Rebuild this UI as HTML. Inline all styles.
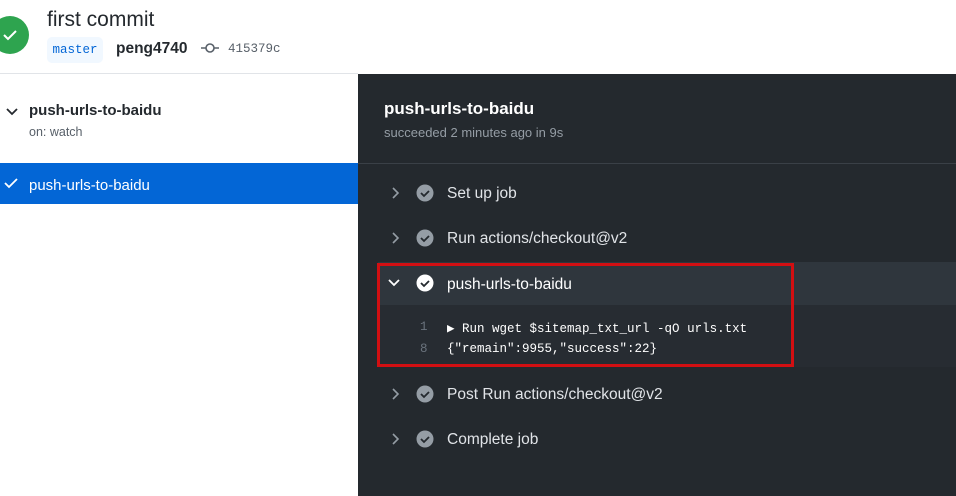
<!DOCTYPE html>
<html><head><style>
*{margin:0;padding:0;box-sizing:border-box}
body{width:956px;height:496px;overflow:hidden;background:#fff;font-family:"Liberation Sans",sans-serif;position:relative}
.abs{position:absolute}
.mono{font-family:"Liberation Mono",monospace}
.step{position:absolute;left:358px;width:598px;height:45px;color:#e1e4e8;font-size:15.5px}
.step .chev{position:absolute;left:32px;top:15px}
.step .ic{position:absolute;left:58px;top:13px}
.step .t{position:absolute;left:89px;top:14px}
</style></head><body>
<div class="abs" style="left:-9px;top:16px;width:38px;height:38px;border-radius:50%;background:#2ea44f"></div>
<svg class="abs" style="left:2px;top:28px" width="16" height="14"><path d="M2 7l4 4 8-8" stroke="#fff" stroke-width="2" fill="none"/></svg>
<div class="abs" style="left:47px;top:8px;font-size:21px;color:#24292e">first commit</div>
<div class="abs mono" style="left:47px;top:37px;width:56px;height:26px;background:#f1f8ff;border-radius:5px;color:#0366d6;font-size:12.5px;line-height:26px;text-align:center">master</div>
<div class="abs" style="left:116px;top:40px;font-size:15.5px;font-weight:bold;color:#24292e">peng4740</div>
<svg class="abs" style="left:201px;top:41px" width="18" height="14"><circle cx="9" cy="7" r="4" stroke="#586069" stroke-width="1.6" fill="none"/><path d="M0 7h5M13 7h5" stroke="#586069" stroke-width="1.6"/></svg>
<div class="abs mono" style="left:228px;top:42px;font-size:12.5px;color:#586069">415379c</div>
<div class="abs" style="left:0;top:73px;width:358px;height:1px;background:#e1e4e8"></div>
<svg class="abs" style="left:5px;top:107px" width="14" height="10"><path d="M2 2l5 5 5-5" stroke="#24292e" stroke-width="1.8" fill="none"/></svg>
<div class="abs" style="left:29px;top:102px;font-size:15px;font-weight:bold;color:#24292e">push-urls-to-baidu</div>
<div class="abs" style="left:29px;top:125px;font-size:12.5px;color:#586069">on: watch</div>
<div class="abs" style="left:0;top:163px;width:358px;height:41px;background:#0366d6"></div>
<svg class="abs" style="left:4px;top:177px" width="14" height="12"><path d="M1 6l4 4 8-8" stroke="#fff" stroke-width="1.8" fill="none"/></svg>
<div class="abs" style="left:29px;top:177px;font-size:15px;color:#fff">push-urls-to-baidu</div>
<div class="abs" style="left:358px;top:74px;width:598px;height:422px;background:#24292e"></div>
<div class="abs" style="left:384px;top:99px;font-size:17px;font-weight:bold;color:#fff">push-urls-to-baidu</div>
<div class="abs" style="left:384px;top:125px;font-size:13px;color:#959da5">succeeded 2 minutes ago in 9s</div>
<div class="abs" style="left:358px;top:163px;width:598px;height:1px;background:#3a4047"></div>

<div class="step" style="top:171px"><svg class="chev" width="10" height="14"><path d="M3 2l5 5-5 5" stroke="#959da5" stroke-width="1.6" fill="none"/></svg><svg class="ic" width="18" height="18"><circle cx="9" cy="9" r="8.5" fill="#959da5"/><path d="M5 9l3 3 5-5" stroke="#24292e" stroke-width="1.8" fill="none"/></svg><span class="t">Set up job</span></div>
<div class="step" style="top:216px"><svg class="chev" width="10" height="14"><path d="M3 2l5 5-5 5" stroke="#959da5" stroke-width="1.6" fill="none"/></svg><svg class="ic" width="18" height="18"><circle cx="9" cy="9" r="8.5" fill="#959da5"/><path d="M5 9l3 3 5-5" stroke="#24292e" stroke-width="1.8" fill="none"/></svg><span class="t">Run actions/checkout@v2</span></div>
<div class="abs" style="left:378px;top:305px;width:578px;height:62px;background:#272c32"></div>
<div class="step" style="top:262px;left:378px;width:578px;height:43px;background:#2f363d;color:#fff"><svg class="chev" style="left:9px;top:16px" width="14" height="10"><path d="M2 2l5 5 5-5" stroke="#fff" stroke-width="1.8" fill="none"/></svg><svg class="ic" style="left:38px;top:12px" width="18" height="18"><circle cx="9" cy="9" r="8.5" fill="#fff"/><path d="M5 9l3 3 5-5" stroke="#24292e" stroke-width="1.8" fill="none"/></svg><span class="t" style="left:69px">push-urls-to-baidu</span></div>
<div class="abs mono" style="left:420px;top:320px;font-size:12.5px;color:#6a737d">1</div>
<div class="abs mono" style="left:447px;top:320px;font-size:12.5px;color:#fff">▶ Run wget $sitemap_txt_url -qO urls.txt</div>
<div class="abs mono" style="left:420px;top:342px;font-size:12.5px;color:#6a737d">8</div>
<div class="abs mono" style="left:447px;top:342px;font-size:12.5px;color:#fff">{"remain":9955,"success":22}</div>
<div class="abs" style="left:377px;top:263px;width:417px;height:104px;border:3px solid #d20f12"></div>
<div class="step" style="top:372px"><svg class="chev" width="10" height="14"><path d="M3 2l5 5-5 5" stroke="#959da5" stroke-width="1.6" fill="none"/></svg><svg class="ic" width="18" height="18"><circle cx="9" cy="9" r="8.5" fill="#959da5"/><path d="M5 9l3 3 5-5" stroke="#24292e" stroke-width="1.8" fill="none"/></svg><span class="t">Post Run actions/checkout@v2</span></div>
<div class="step" style="top:417px"><svg class="chev" width="10" height="14"><path d="M3 2l5 5-5 5" stroke="#959da5" stroke-width="1.6" fill="none"/></svg><svg class="ic" width="18" height="18"><circle cx="9" cy="9" r="8.5" fill="#959da5"/><path d="M5 9l3 3 5-5" stroke="#24292e" stroke-width="1.8" fill="none"/></svg><span class="t">Complete job</span></div>
</body></html>
